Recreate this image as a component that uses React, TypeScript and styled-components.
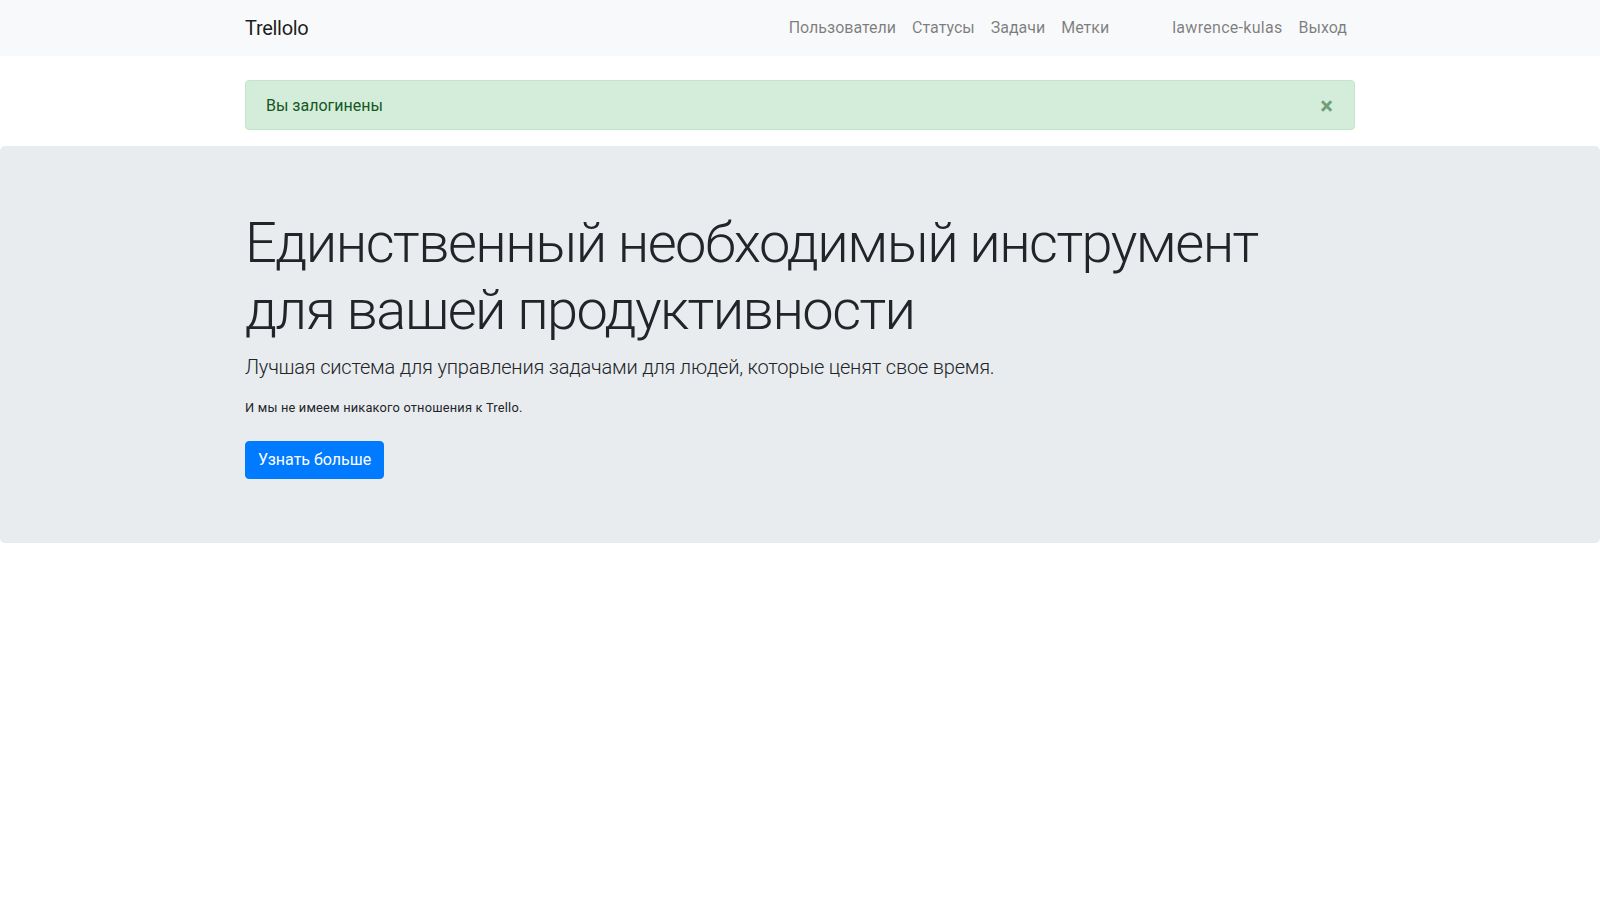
import React from "react";
import styled, { createGlobalStyle } from "styled-components";

const Global = createGlobalStyle`
  * { box-sizing: border-box; }
  body {
    margin: 0;
    font-family: Roboto, "Helvetica Neue", Arial, "Noto Sans", sans-serif;
    font-size: 16px;
    line-height: 1.5;
    color: #212529;
    background: #fff;
  }
`;

const Container = styled.div`
  width: 100%;
  max-width: 1140px;
  margin: 0 auto;
  padding: 0 15px;
`;

const NavBar = styled.nav`
  background: #f8f9fa;
  padding: 8px 16px;
`;

const NavInner = styled(Container)`
  display: flex;
  align-items: center;
`;

const Brand = styled.a`
  font-size: 20px;
  line-height: 30px;
  padding: 5px 0;
  color: rgba(0, 0, 0, 0.9);
  text-decoration: none;
  margin-right: 16px;
  letter-spacing: -0.3px;
`;

const NavList = styled.ul<{ $gap?: number }>`
  display: flex;
  list-style: none;
  margin: 0 0 0 ${(p) => (p.$gap !== undefined ? `${p.$gap}px` : "auto")};
  padding: 0;
`;

const NavLink = styled.a<{ $wide?: boolean }>`
  display: block;
  padding: 8px;
  color: rgba(0, 0, 0, 0.5);
  text-decoration: none;
  line-height: 24px;
  letter-spacing: ${(p) => (p.$wide ? "0.3px" : "0")};
`;

const Alert = styled.div`
  position: relative;
  margin: 24px 0 16px;
  padding: 13px 64px 11px 20px;
  background: #d4edda;
  border: 1px solid #c3e6cb;
  border-radius: 4px;
  color: #155724;
`;

const Close = styled.button`
  position: absolute;
  top: 1px;
  right: 1px;
  padding: 12px 20px;
  background: transparent;
  border: 0;
  font-family: inherit;
  font-size: 24px;
  font-weight: 700;
  line-height: 1;
  color: #2f6b3e;
  opacity: 0.6;
  cursor: pointer;
  display: flex;
  align-items: center;
  height: 48px;
`;

const Jumbotron = styled.section`
  background: #e9ecef;
  border-radius: 4.8px;
  padding: 64px 0;
  margin-bottom: 32px;
`;

const Title = styled.h1`
  font-size: 56px;
  font-weight: 300;
  line-height: 1.2;
  letter-spacing: -1.55px;
  margin: 0 0 8px;
`;

const Lead = styled.p`
  font-size: 20px;
  font-weight: 300;
  letter-spacing: -0.2px;
  margin: 0 0 16px;
`;

const Note = styled.p`
  font-size: 12.8px;
  letter-spacing: 0.2px;
  margin: 0 0 23px;
`;

const Button = styled.a`
  display: inline-block;
  background: #007bff;
  color: #fff;
  border: 1px solid #007bff;
  border-radius: 4px;
  padding: 6px 12px;
  font-size: 16px;
  line-height: 24px;
  text-decoration: none;
`;

export default function App() {
  return (
    <>
      <Global />
      <NavBar>
        <NavInner>
          <Brand href="#">Trellolo</Brand>
          <NavList>
            <li><NavLink href="#">Пользователи</NavLink></li>
            <li><NavLink href="#">Статусы</NavLink></li>
            <li><NavLink href="#">Задачи</NavLink></li>
            <li><NavLink href="#">Метки</NavLink></li>
          </NavList>
          <NavList $gap={47}>
            <li><NavLink href="#" $wide>lawrence-kulas</NavLink></li>
            <li><NavLink href="#">Выход</NavLink></li>
          </NavList>
        </NavInner>
      </NavBar>
      <Container>
        <Alert>
          Вы залогинены
          <Close aria-label="Close">×</Close>
        </Alert>
      </Container>
      <Jumbotron>
        <Container>
          <Title>
            Единственный необходимый инструмент
            <br />
            для вашей продуктивности
          </Title>
          <Lead>Лучшая система для управления задачами для людей, которые ценят свое время.</Lead>
          <Note>И мы не имеем никакого отношения к Trello.</Note>
          <Button href="#">Узнать больше</Button>
        </Container>
      </Jumbotron>
    </>
  );
}
